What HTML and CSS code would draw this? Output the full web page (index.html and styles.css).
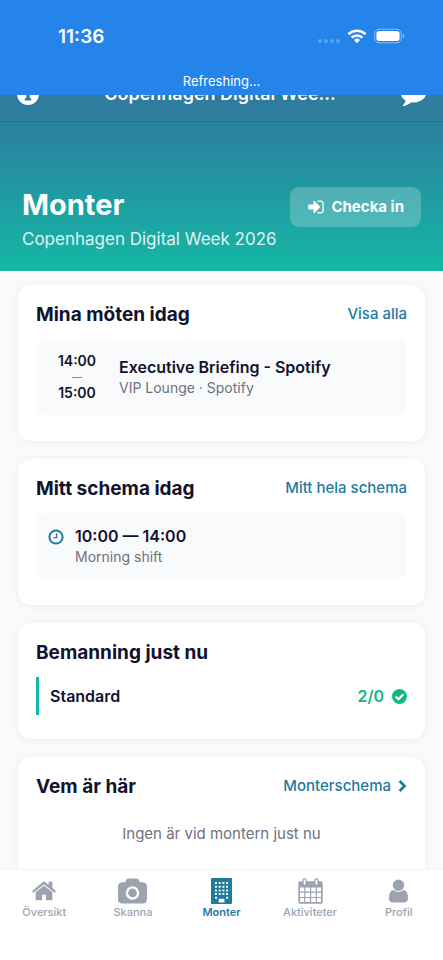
FILE: index.html
```html
<!DOCTYPE html>
<html lang="sv">
<head>
<meta charset="utf-8">
<meta name="viewport" content="width=device-width, initial-scale=1">
<title>Monter</title>
<link rel="stylesheet" href="styles.css">
</head>
<body>
<div class="refresh-banner">
  <div class="status-bar">
    <span class="clock">11:36</span>
    <div class="status-icons">
      <svg class="dots" width="22" height="16" viewBox="0 0 22 16" aria-hidden="true"><circle cx="2" cy="13" r="1.900"/><circle cx="8" cy="13" r="1.900"/><circle cx="14" cy="13" r="1.900"/><circle cx="20" cy="13" r="1.900"/></svg>
      <svg width="20" height="16" viewBox="0 0 20 16" aria-hidden="true"><g fill="none" stroke="#fff" stroke-width="2.600"><path d="M1.400 6.200a12.400 12.400 0 0 1 17.200 0"/><path d="M4.600 9.600a7.800 7.800 0 0 1 10.800 0"/></g><path fill="#fff" d="M10 15.200l-3-3.200a4.300 4.300 0 0 1 6 0z"/></svg>
      <svg width="31" height="16" viewBox="0 0 31 16" aria-hidden="true"><rect x=".7" y="1.200" width="26.600" height="13.600" rx="4.300" fill="none" stroke="#fff" stroke-opacity=".45"/><rect x="2.400" y="3" width="23.200" height="10" rx="2.800" fill="#fff"/><path d="M28.800 5.800q1.600.6 1.600 2.200t-1.600 2.200z" fill="#fff" fill-opacity=".5"/></svg>
    </div>
  </div>
  <p class="refresh-text">Refreshing...</p>
</div>

<div class="app">
  <header class="nav-bar">
    <button class="icon-button" type="button" aria-label="Information">
      <svg width="22" height="22" viewBox="0 0 22 22"><path fill="#fff" fill-rule="evenodd" d="M11 0a11 11 0 1 1 0 22a11 11 0 0 1 0-22zM9.500 3.200h3v3h-3zM7.800 8.200v2h1.500v5H7.800v2.300h6.400v-2.300h-1.500v-7z"/></svg>
    </button>
    <span class="nav-title">Copenhagen Digital Wee...</span>
    <button class="icon-button" type="button" aria-label="Meddelanden">
      <svg width="25" height="25" viewBox="0 0 1792 1792"><path fill="#fff" d="M1792 896q0 174-120 321.500t-326 233-450 85.500q-70 0-145-8-198 175-460 242-49 14-114 22-17 2-30.500-9t-17.500-29v-1q-3-4-.5-12t2-10 4.500-9.500l6-9 7-8.500 8-9q7-8 31-34.500t34.500-38 31-39.500 32.500-51 27-59 26-76q-157-89-247.500-220t-90.500-281q0-130 71-248.500t191-204.500 286-136.500 348-50.500q244 0 450 85.500t326 233 120 321.500z"/></svg>
    </button>
  </header>

  <section class="hero">
    <div class="hero-text">
      <h1>Monter</h1>
      <p>Copenhagen Digital Week 2026</p>
    </div>
    <button class="check-in" type="button">
      <svg width="18" height="18" viewBox="0 0 1792 1792" aria-hidden="true"><path fill="#fff" d="M1312 896q0 26-19 45l-544 544q-19 19-45 19t-45-19-19-45v-288h-448q-26 0-45-19t-19-45v-384q0-26 19-45t45-19h448v-288q0-26 19-45t45-19 45 19l544 544q19 19 19 45zm352-352v704q0 119-84.500 203.500t-203.500 84.500h-320q-13 0-22.500-9.500t-9.500-22.500q0-4-1-20t-.5-26.500 3-23.500 10-19.500 20.500-6.500h320q66 0 113-47t47-113v-704q0-66-47-113t-113-47h-312l-11.500-1-11.500-3-8-5.500-7-9-2-13.500q0-4-1-20t-.5-26.500 3-23.500 10-19.500 20.500-6.500h320q119 0 203.500 84.500t84.500 203.500z"/></svg>
      Checka in
    </button>
  </section>

  <main class="content">
    <section class="card">
      <div class="card-head">
        <h2>Mina möten idag</h2>
        <a href="#meetings">Visa alla</a>
      </div>
      <article class="item meeting">
        <div class="times"><span>14:00</span><span class="dash">—</span><span>15:00</span></div>
        <div>
          <h3>Executive Briefing - Spotify</h3>
          <p>VIP Lounge · Spotify</p>
        </div>
      </article>
    </section>

    <section class="card">
      <div class="card-head">
        <h2>Mitt schema idag</h2>
        <a href="#schedule">Mitt hela schema</a>
      </div>
      <article class="item shift">
        <svg width="16" height="24" viewBox="0 0 16 24" fill="none" stroke="#1f7a9e" aria-hidden="true"><circle cx="8" cy="12" r="6.600" stroke-width="2"/><path d="M8.600 8.200v4.400H5.400" stroke-width="1.300"/></svg>
        <div>
          <h3>10:00 — 14:00</h3>
          <p>Morning shift</p>
        </div>
      </article>
    </section>

    <section class="card">
      <div class="card-head">
        <h2>Bemanning just nu</h2>
      </div>
      <div class="staffing">
        <h3>Standard</h3>
        <span class="count">2/0
          <svg width="15" height="15" viewBox="0 0 16 16" aria-hidden="true"><circle cx="8" cy="8" r="8" fill="#10b981"/><path d="M3.900 8l3 3 5.300-5.300" fill="none" stroke="#fff" stroke-width="2.300"/></svg>
        </span>
      </div>
    </section>

    <section class="card">
      <div class="card-head">
        <h2>Vem är här</h2>
        <a href="#booth">Monterschema
          <svg width="9" height="12" viewBox="0 0 9 12" aria-hidden="true"><path d="M1.600 1l5 5-5 5" fill="none" stroke="#1f7a9e" stroke-width="2.600"/></svg>
        </a>
      </div>
      <p class="empty">Ingen är vid montern just nu</p>
    </section>
  </main>

  <nav class="tab-bar">
    <a href="#overview">
      <svg width="26" height="26" viewBox="0 0 1792 1792" aria-hidden="true"><path d="M1472 992v480q0 26-19 45t-45 19h-384v-384h-256v384h-384q-26 0-45-19t-19-45v-480q0-1 .5-3t.5-3l575-474 575 474q1 2 1 6zm223-69l-62 74q-8 9-21 11h-3q-13 0-21-7l-692-577-692 577q-12 8-24 7-13-2-21-11l-62-74q-8-10-7-23.500t11-21.500l719-599q32-26 76-26t76 26l244 204v-195q0-14 9-23t23-9h192q14 0 23 9t9 23v408l219 182q10 8 11 21.500t-7 23.500z"/></svg>
      Översikt
    </a>
    <a href="#scan">
      <svg width="29" height="26" viewBox="-64 -30 1920 1721" aria-hidden="true"><path d="M896 672q119 0 203.500 84.500t84.500 203.500-84.500 203.500-203.500 84.500-203.500-84.500-84.500-203.500 84.500-203.500 203.500-84.500zm704-416q106 0 181 75t75 181v896q0 106-75 181t-181 75h-1408q-106 0-181-75t-75-181v-896q0-106 75-181t181-75h224l51-136q19-49 69.500-84.500t103.500-35.500h512q53 0 103.500 35.500t69.500 84.500l51 136h224zm-704 1152q185 0 316.500-131.500t131.500-316.500-131.500-316.500-316.500-131.500-316.500 131.500-131.500 316.500 131.500 316.500 316.500 131.500z"/></svg>
      Skanna
    </a>
    <a class="active" href="#booth" aria-current="page">
      <svg width="21" height="26" viewBox="0 0 21 26" aria-hidden="true"><path fill-rule="evenodd" d="M1 0h19q1 0 1 1v24q0 1-1 1H1q-1 0-1-1V1q0-1 1-1zM4 4v2h2v-2zm3.700 0v2h2v-2zm3.700 0v2h2v-2zm3.700 0v2h2v-2zM4 7.700v2h2v-2zm3.700 0v2h2v-2zm3.700 0v2h2v-2zm3.700 0v2h2v-2zM4 11.400v2h2v-2zm3.700 0v2h2v-2zm3.700 0v2h2v-2zm3.700 0v2h2v-2zM4 15.100v2h2v-2zm3.700 0v2h2v-2zm3.700 0v2h2v-2zm3.700 0v2h2v-2zM4 18.800v2h2v-2zm11.100 0v2h2v-2zM7.700 20.800v3.600h5.700v-3.600z"/></svg>
      Monter
    </a>
    <a href="#activities">
      <svg width="25" height="26" viewBox="0 0 25 26" aria-hidden="true"><path fill-rule="evenodd" d="M2 3.300h21q1.700 0 1.700 1.700v19q0 1.700-1.700 1.700H2Q.3 25.700.3 24V5Q.3 3.300 2 3.300zM2 9.600v3.900h4.200V9.600zm5.400 0v3.900h4.600V9.600zm5.800 0v3.900h4.600V9.600zm5.800 0v3.900h4V9.600zM2 14.700v4.200h4.200v-4.200zm5.400 0v4.200h4.600v-4.200zm5.800 0v4.200h4.600v-4.200zm5.800 0v4.200h4v-4.200zM2 20.100v3.900h4.200v-3.900zm5.400 0v3.900h4.600v-3.900zm5.800 0v3.900h4.600v-3.900zm5.800 0v3.900h4v-3.900z"/><g fill="none" stroke-linecap="round"><path d="M6.600 2.400v3.400M18.400 2.400v3.400" stroke="#9ca3af" stroke-width="4.400"/><path d="M6.600 2.400v3.400M18.400 2.400v3.400" stroke="#fff" stroke-width="1.800"/></g></svg>
      Aktiviteter
    </a>
    <a href="#profile">
      <svg width="19" height="26" viewBox="256 28 1280 1736" aria-hidden="true"><path d="M1536 1399q0 109-62.500 187t-150.500 78h-854q-88 0-150.500-78t-62.500-187q0-85 8.500-160.500t31.500-152 58.500-131 94-89 134.500-34.500q131 128 313 128t313-128q76 0 134.500 34.500t94 89 58.500 131 31.500 152 8.500 160.500zm-256-887q0 159-112.500 271.500t-271.500 112.500-271.500-112.500-112.500-271.500 112.500-271.500 271.500-112.500 271.500 112.500 112.500 271.500z"/></svg>
      Profil
    </a>
  </nav>
</div>
</body>
</html>
```
FILE: styles.css
```css
* {
  box-sizing: border-box;
}

body,
h1,
h2,
h3,
p {
  margin: 0;
}

body {
  font-family: Inter, "Liberation Sans", sans-serif;
  color: #12122b;
  background: #f9fafc;
}

svg {
  display: block;
  flex: none;
}

a {
  color: #1f7a9e;
  text-decoration: none;
}

button {
  border: 0;
  font: inherit;
  color: #fff;
}

/* Pull-to-refresh banner, laid over the navigation bar */
.refresh-banner {
  position: fixed;
  top: 0;
  left: 0;
  right: 0;
  z-index: 2;
  padding: 24px 0 4px;
  color: #fff;
  background: #2584ea;
}

.status-bar {
  display: flex;
  justify-content: space-between;
  align-items: center;
  height: 24px;
  padding: 0 38px 0 58px;
}

.clock {
  font-size: 19px;
  font-weight: 600;
}

.status-icons {
  display: flex;
  gap: 7px;
}

.dots {
  fill: #fff;
  opacity: .25;
}

.refresh-text {
  margin-top: 24px;
  font-size: 13px;
  line-height: 19px;
  text-align: center;
}

.app {
  display: flex;
  flex-direction: column;
  height: 100vh;
}

.nav-bar {
  flex: none;
  display: flex;
  align-items: center;
  justify-content: space-between;
  padding: 68px 17px 2px;
  border-bottom: 1px solid #29708f;
  color: #fff;
  background: #2e7c9e;
}

.nav-title {
  font-size: 18px;
  font-weight: 600;
  line-height: 51px;
}

.icon-button {
  padding: 0;
  background: none;
}

.hero {
  flex: none;
  display: flex;
  align-items: flex-start;
  justify-content: space-between;
  padding: 65px 22px 20px;
  color: #fff;
  background: linear-gradient(#2b809f, #15b7a5);
}

.hero h1 {
  font-size: 29px;
  line-height: 36px;
}

.hero p {
  margin-top: 4px;
  font-size: 17px;
  line-height: 24px;
  opacity: .85;
}

.check-in {
  display: flex;
  align-items: center;
  gap: 6px;
  padding: 0 17px;
  border-radius: 9px;
  font-size: 15px;
  font-weight: 700;
  line-height: 40px;
  white-space: nowrap;
  background: rgba(255, 255, 255, .22);
}

.content {
  flex: 1;
  display: flex;
  flex-direction: column;
  gap: 18px;
  min-height: 0;
  padding: 14px 18px 18px;
  overflow-y: auto;
  scrollbar-width: none;
}

.card {
  flex: none;
  padding: 18px;
  border-radius: 13px;
  background: #fff;
  box-shadow: 0 1px 8px rgba(18, 18, 43, .06);
}

.card-head {
  display: flex;
  align-items: flex-start;
  justify-content: space-between;
  margin-bottom: 12px;
}

.card-head a {
  display: flex;
  align-items: center;
  gap: 7px;
  font-size: 15px;
  font-weight: 500;
  line-height: 22px;
}

h2 {
  font-size: 19px;
  font-weight: 700;
  line-height: 24px;
}

h3 {
  font-size: 16px;
  font-weight: 600;
  line-height: 22px;
}

.item {
  display: flex;
  margin-bottom: 8px;
  border-radius: 9px;
  background: #f9fafc;
}

.item p {
  font-size: 14px;
  line-height: 20px;
  color: #6b7280;
}

.meeting {
  align-items: center;
  gap: 15px;
  padding: 13px 14px;
}

.times {
  display: flex;
  flex-direction: column;
  width: 54px;
  font-size: 14px;
  font-weight: 600;
  line-height: 18px;
  text-align: center;
}

.dash {
  font-size: 10px;
  font-weight: 400;
  line-height: 14px;
  color: #6b7280;
}

.shift {
  gap: 11px;
  padding: 12px;
}

.staffing {
  display: flex;
  align-items: center;
  justify-content: space-between;
  margin-bottom: 6px;
  padding: 8px 0 8px 11px;
  border-left: 3px solid #14b8a6;
}

.count {
  display: flex;
  align-items: center;
  gap: 8px;
  font-size: 16px;
  font-weight: 600;
  color: #10b981;
}

.empty {
  padding: 12px 0 24px;
  font-size: 15px;
  line-height: 22px;
  text-align: center;
  color: #6b7280;
}

.tab-bar {
  flex: none;
  display: grid;
  grid-template-columns: repeat(5, 1fr);
  padding: 8px 0 40px;
  border-top: 1px solid #f3f4f6;
  background: #fff;
}

.tab-bar a {
  display: flex;
  flex-direction: column;
  align-items: center;
  font-size: 11px;
  font-weight: 500;
  line-height: 16px;
  color: #9ca3af;
}

.tab-bar svg {
  fill: currentColor;
}

.tab-bar .active {
  font-weight: 600;
  color: #1f7a9e;
}
```
